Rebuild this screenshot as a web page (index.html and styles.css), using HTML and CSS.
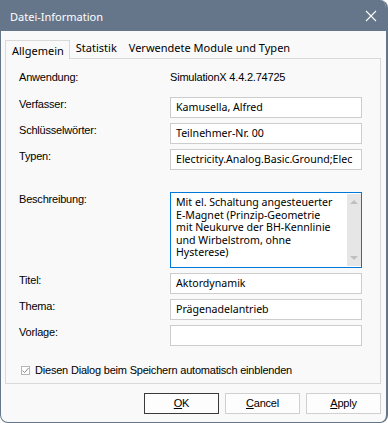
FILE: index.html
```html
<!DOCTYPE html>
<html lang="de">
<head>
    <meta charset="UTF-8">
    <title>Datei-Information</title>
    <link rel="stylesheet" href="styles.css">
</head>
<body>
    <div class="window">
        <div class="titlebar">
            <span class="title">Datei-Information</span>
            <svg class="close" width="12" height="12" viewBox="0 0 12 12">
                <path d="M1 1 L11 11 M11 1 L1 11" stroke="#ffffff" stroke-width="1.1" fill="none"/>
            </svg>
        </div>
        <div class="content">
            <div class="tabs">
                <div class="tab active">Allgemein</div>
                <div class="tab">Statistik</div>
                <div class="tab">Verwendete Module und Typen</div>
            </div>
            <div class="panel">
                <div class="form">
                    <div class="row">
                        <span class="label">Anwendung:</span>
                        <span class="value">SimulationX 4.4.2.74725</span>
                    </div>
                    <div class="row">
                        <span class="label">Verfasser:</span>
                        <div class="field">Kamusella, Alfred</div>
                    </div>
                    <div class="row">
                        <span class="label">Schlüsselwörter:</span>
                        <div class="field">Teilnehmer-Nr. 00</div>
                    </div>
                    <div class="row">
                        <span class="label">Typen:</span>
                        <div class="field">Electricity.Analog.Basic.Ground;Elec</div>
                    </div>
                    <div class="row rowDesc">
                        <span class="label">Beschreibung:</span>
                        <div class="memo">
                            <div class="memoText">Mit el. Schaltung angesteuerter<br>E-Magnet (Prinzip-Geometrie<br>mit Neukurve der BH-Kennlinie<br>und Wirbelstrom, ohne<br>Hysterese)</div>
                            <div class="scrollbar">
                                <span class="arrow up"></span>
                                <span class="arrow down"></span>
                            </div>
                        </div>
                    </div>
                    <div class="row">
                        <span class="label">Titel:</span>
                        <div class="field">Aktordynamik</div>
                    </div>
                    <div class="row">
                        <span class="label">Thema:</span>
                        <div class="field">Prägenadelantrieb</div>
                    </div>
                    <div class="row">
                        <span class="label">Vorlage:</span>
                        <div class="field"></div>
                    </div>
                </div>
                <div class="check">
                    <span class="box">
                        <svg width="7" height="7" viewBox="0 0 7 7">
                            <path d="M0.5 3.5 L2.6 5.6 L6.5 1" stroke="#8a8a8a" stroke-width="1" fill="none"/>
                        </svg>
                    </span>
                    <span>Diesen Dialog beim Speichern automatisch einblenden</span>
                </div>
            </div>
            <div class="buttons">
                <div class="btn default"><u>O</u>K</div>
                <div class="btn"><u>C</u>ancel</div>
                <div class="btn"><u>A</u>pply</div>
            </div>
        </div>
    </div>
</body>
</html>
```

FILE: styles.css
```css
*{
    margin: 0;
    padding: 0;
    box-sizing: border-box;
}
body{
    background-color: #ffffff;
    font-family: "Liberation Sans", Arial, sans-serif;
}
.window{
    width: 388px;
    height: 423px;
    background-color: #f9f9f9;
    border: 1px solid #66768a;
    border-top: none;
    border-right-width: 2px;
    border-radius: 0 8px 8px 8px;
    overflow: hidden;
}
.titlebar{
    height: 31px;
    background-color: #66768a;
    display: flex;
    align-items: center;
    justify-content: space-between;
    padding: 1px 9px 0 9px;
}
.title{
    font-family: "Noto Sans", sans-serif;
    font-size: 11px;
    color: #ffffff;
}
.content{
    padding: 9px 5px 0 4px;
}
.tabs{
    display: flex;
    height: 18px;
    font-family: "Noto Sans", sans-serif;
    font-size: 11px;
    color: #000000;
}
.tab{
    padding: 0 6px;
    line-height: 15px;
}
.tab.active{
    height: 19px;
    padding: 2px 5px 0 6px;
    border: 1px solid #d9d9d9;
    border-bottom: none;
    background-color: #f9f9f9;
    position: relative;
    z-index: 1;
}
.panel{
    height: 326px;
    border: 1px solid #d9d9d9;
    background-color: #f9f9f9;
    padding: 11px 18px 0 13px;
}
.form{
    display: flex;
    flex-direction: column;
    gap: 5px;
}
.row{
    display: flex;
    font-size: 11px;
    letter-spacing: -0.2px;
    line-height: 13px;
}
.row:first-child{
    height: 22px;
}
.label{
    width: 151px;
    padding-top: 1px;
    flex-shrink: 0;
}
.value{
    padding-top: 1px;
}
.field{
    width: 192px;
    height: 21px;
    border: 1px solid #cdcdcd;
    background-color: #ffffff;
    padding: 0 2px 0 5px;
    font-family: "Noto Sans", sans-serif;
    font-size: 10.6px;
    letter-spacing: 0;
    line-height: 19px;
    white-space: nowrap;
    overflow: hidden;
}
.rowDesc{
    margin-top: 17px;
}
.memo{
    width: 192px;
    height: 76px;
    border: 1px solid #0078d7;
    background-color: #ffffff;
    display: flex;
    justify-content: space-between;
}
.memoText{
    padding: 3px 0 0 5px;
    font-family: "Noto Sans", sans-serif;
    font-size: 10.6px;
    letter-spacing: 0;
    line-height: 12.6px;
    white-space: nowrap;
}
.scrollbar{
    width: 14px;
    margin: 1px 0;
    background-color: #e6e6e6;
    display: flex;
    flex-direction: column;
    justify-content: space-between;
    align-items: center;
    padding: 6px 0 6px 0;
}
.arrow{
    width: 0;
    height: 0;
    border-left: 4.5px solid transparent;
    border-right: 4.5px solid transparent;
}
.arrow.up{
    border-bottom: 4px solid #bfbfbf;
}
.arrow.down{
    border-top: 4px solid #bfbfbf;
}
.check{
    margin-top: 18px;
    margin-left: 2px;
    display: flex;
    align-items: center;
    gap: 5px;
    font-size: 11px;
    letter-spacing: -0.2px;
    line-height: 13px;
}
.box{
    width: 9px;
    height: 9px;
    border: 1px solid #b5b5b5;
    background-color: #ffffff;
    display: flex;
    align-items: center;
    justify-content: center;
}
.buttons{
    display: flex;
    justify-content: flex-end;
    gap: 6px;
    padding: 9px 0 0 0;
}
.btn{
    width: 75px;
    height: 21px;
    border: 1px solid #d0d0d0;
    background-color: #fdfdfd;
    font-size: 11px;
    letter-spacing: -0.2px;
    line-height: 19px;
    text-align: center;
}
.btn.default{
    border-color: #3a3a3a;
}
```
